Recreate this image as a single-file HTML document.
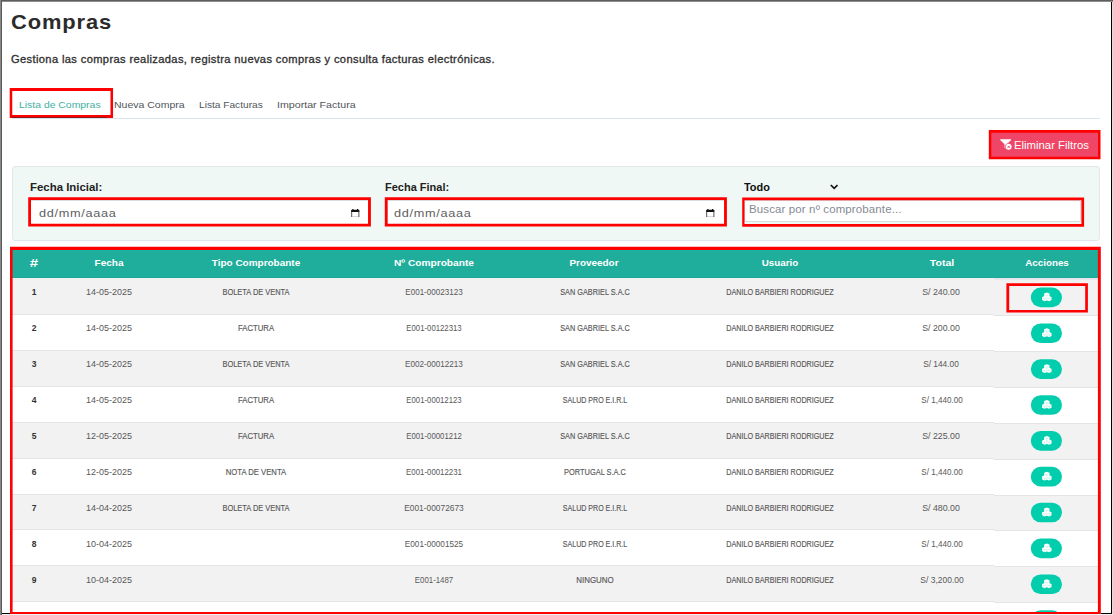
<!DOCTYPE html>
<html lang="es"><head><meta charset="utf-8"><title>Compras</title>
<style>
html,body{margin:0;padding:0;background:#fff;}
body{width:1113px;height:615px;overflow:hidden;font-family:"Liberation Sans",sans-serif;}
#page{position:relative;width:1113px;height:615px;overflow:hidden;background:#fff;}
#page>*{position:absolute;box-sizing:border-box;}
.t{white-space:nowrap;display:block;margin:0;padding:0;font-weight:normal;}
.row{left:12px;width:982px;}
.row.act{left:994px;width:106px;}
.odd{background:#f2f2f2;border-bottom:1px solid #e4e4e6;}
.even{background:#fff;border-bottom:1px solid #e4e4e6;}
.inp{background:#fff;border:1px solid #d8dde1;border-radius:2px;}
</style></head><body>
<div id="page">
<div style="left:12px;top:117.5px;width:1088px;height:1px;background:#dbe3ec"></div>
<div style="left:12px;top:117px;width:95px;height:1px;background:#444"></div>
<div style="left:990px;top:131px;width:110px;height:27.5px;background:#ef4668;border-radius:2px"></div>
<svg style="left:999.6px;top:138.5px;width:12.4px;height:11.45px" viewBox="0 0 130 120" aria-hidden="true"><path fill="#fff" d="M5 3h108c4 0 6 4 3 7L72 56v6L48 62V56L2 10C0 7 1 3 5 3z"/><path fill="#fff" d="M48 56h24v58L48 92z"/><circle cx="91" cy="82" r="38" fill="#ef4668"/><circle cx="91" cy="82" r="31" fill="#fff"/><path stroke="#ef4668" stroke-width="10" stroke-linecap="round" d="M83 74l16 16M99 74l-16 16"/></svg>
<div style="left:12px;top:166px;width:1087.6px;height:75px;background:#eff8f4;border:1px solid #e2e8ea;border-radius:3px"></div>
<div class="inp" style="left:30px;top:199.8px;width:339px;height:25px"></div>
<div class="inp" style="left:386.5px;top:199.8px;width:339px;height:25px"></div>
<div class="inp" style="left:744px;top:199.8px;width:336.5px;height:22px"></div>
<svg style="left:351.1px;top:208.5px;width:8.5px;height:8.9px" viewBox="0 0 82 87" aria-hidden="true"><path fill="#111" d="M12 0h12v8h34V0h12v8h4c5 0 8 3 8 8v14H0V16c0-5 3-8 8-8h4z"/><path fill="none" stroke="#666" stroke-width="11" d="M5.500 28v46c0 4 3 7 7 7h57c4 0 7-3 7-7V28"/></svg>
<svg style="left:706.3px;top:208.6px;width:8.5px;height:8.9px" viewBox="0 0 82 87" aria-hidden="true"><path fill="#111" d="M12 0h12v8h34V0h12v8h4c5 0 8 3 8 8v14H0V16c0-5 3-8 8-8h4z"/><path fill="none" stroke="#666" stroke-width="11" d="M5.500 28v46c0 4 3 7 7 7h57c4 0 7-3 7-7V28"/></svg>
<svg style="left:829.6px;top:184.4px;width:8.4px;height:6px" viewBox="0 0 84 60" aria-hidden="true"><path fill="none" stroke="#111" stroke-width="17" d="M8 10l34 34 34-34"/></svg>
<div style="left:12px;top:249px;width:1088px;height:29px;background:#1fae9b"></div>
<div style="left:12px;top:277px;width:1088px;height:1px;background:#1aa996"></div>
<div style="left:12px;top:250px;width:1088px;height:1px;background:#17b5a2"></div>
<div class="row odd" style="top:278px;height:37px"></div>
<div class="row odd act" style="top:279px;height:37px"></div>
<div class="row even" style="top:315px;height:36px"></div>
<div class="row even act" style="top:316px;height:36px"></div>
<div class="row odd" style="top:351px;height:36px"></div>
<div class="row odd act" style="top:352px;height:36px"></div>
<div class="row even" style="top:387px;height:36px"></div>
<div class="row even act" style="top:388px;height:36px"></div>
<div class="row odd" style="top:423px;height:36px"></div>
<div class="row odd act" style="top:424px;height:36px"></div>
<div class="row even" style="top:459px;height:36px"></div>
<div class="row even act" style="top:460px;height:36px"></div>
<div class="row odd" style="top:495px;height:35px"></div>
<div class="row odd act" style="top:496px;height:35px"></div>
<div class="row even" style="top:530px;height:36px"></div>
<div class="row even act" style="top:531px;height:36px"></div>
<div class="row odd" style="top:566px;height:36px"></div>
<div class="row odd act" style="top:567px;height:36px"></div>
<div class="row even" style="top:602px;height:36px"></div>
<div class="row even act" style="top:603px;height:36px"></div>
<svg style="left:0;top:0;width:1113px;height:615px" viewBox="0 0 1113 615" aria-hidden="true"><g transform="translate(1030.85 287.55)"><rect width="31.1" height="19.65" rx="9.82" fill="#02cdad"/><g transform="translate(10.95 4.9) scale(0.1005)"><path fill="#fff" d="M50 0l27 10v28l20 8v30L74 88 50 80 26 88 3 76V46l20-8V10z"/><path fill="none" stroke="#02cdad" stroke-opacity=".5" stroke-width="3.5" d="M30 22l20 8 20-8M50 30v18M9 57l17 7 17-7M26 64v18M57 57l17 7 17-7M74 64v18M50 54v22"/></g></g><g transform="translate(1030.85 323.41)"><rect width="31.1" height="19.65" rx="9.82" fill="#02cdad"/><g transform="translate(10.95 4.9) scale(0.1005)"><path fill="#fff" d="M50 0l27 10v28l20 8v30L74 88 50 80 26 88 3 76V46l20-8V10z"/><path fill="none" stroke="#02cdad" stroke-opacity=".5" stroke-width="3.5" d="M30 22l20 8 20-8M50 30v18M9 57l17 7 17-7M26 64v18M57 57l17 7 17-7M74 64v18M50 54v22"/></g></g><g transform="translate(1030.85 359.27)"><rect width="31.1" height="19.65" rx="9.82" fill="#02cdad"/><g transform="translate(10.95 4.9) scale(0.1005)"><path fill="#fff" d="M50 0l27 10v28l20 8v30L74 88 50 80 26 88 3 76V46l20-8V10z"/><path fill="none" stroke="#02cdad" stroke-opacity=".5" stroke-width="3.5" d="M30 22l20 8 20-8M50 30v18M9 57l17 7 17-7M26 64v18M57 57l17 7 17-7M74 64v18M50 54v22"/></g></g><g transform="translate(1030.85 395.13)"><rect width="31.1" height="19.65" rx="9.82" fill="#02cdad"/><g transform="translate(10.95 4.9) scale(0.1005)"><path fill="#fff" d="M50 0l27 10v28l20 8v30L74 88 50 80 26 88 3 76V46l20-8V10z"/><path fill="none" stroke="#02cdad" stroke-opacity=".5" stroke-width="3.5" d="M30 22l20 8 20-8M50 30v18M9 57l17 7 17-7M26 64v18M57 57l17 7 17-7M74 64v18M50 54v22"/></g></g><g transform="translate(1030.85 430.99)"><rect width="31.1" height="19.65" rx="9.82" fill="#02cdad"/><g transform="translate(10.95 4.9) scale(0.1005)"><path fill="#fff" d="M50 0l27 10v28l20 8v30L74 88 50 80 26 88 3 76V46l20-8V10z"/><path fill="none" stroke="#02cdad" stroke-opacity=".5" stroke-width="3.5" d="M30 22l20 8 20-8M50 30v18M9 57l17 7 17-7M26 64v18M57 57l17 7 17-7M74 64v18M50 54v22"/></g></g><g transform="translate(1030.85 466.85)"><rect width="31.1" height="19.65" rx="9.82" fill="#02cdad"/><g transform="translate(10.95 4.9) scale(0.1005)"><path fill="#fff" d="M50 0l27 10v28l20 8v30L74 88 50 80 26 88 3 76V46l20-8V10z"/><path fill="none" stroke="#02cdad" stroke-opacity=".5" stroke-width="3.5" d="M30 22l20 8 20-8M50 30v18M9 57l17 7 17-7M26 64v18M57 57l17 7 17-7M74 64v18M50 54v22"/></g></g><g transform="translate(1030.85 502.71)"><rect width="31.1" height="19.65" rx="9.82" fill="#02cdad"/><g transform="translate(10.95 4.9) scale(0.1005)"><path fill="#fff" d="M50 0l27 10v28l20 8v30L74 88 50 80 26 88 3 76V46l20-8V10z"/><path fill="none" stroke="#02cdad" stroke-opacity=".5" stroke-width="3.5" d="M30 22l20 8 20-8M50 30v18M9 57l17 7 17-7M26 64v18M57 57l17 7 17-7M74 64v18M50 54v22"/></g></g><g transform="translate(1030.85 538.57)"><rect width="31.1" height="19.65" rx="9.82" fill="#02cdad"/><g transform="translate(10.95 4.9) scale(0.1005)"><path fill="#fff" d="M50 0l27 10v28l20 8v30L74 88 50 80 26 88 3 76V46l20-8V10z"/><path fill="none" stroke="#02cdad" stroke-opacity=".5" stroke-width="3.5" d="M30 22l20 8 20-8M50 30v18M9 57l17 7 17-7M26 64v18M57 57l17 7 17-7M74 64v18M50 54v22"/></g></g><g transform="translate(1030.85 574.43)"><rect width="31.1" height="19.65" rx="9.82" fill="#02cdad"/><g transform="translate(10.95 4.9) scale(0.1005)"><path fill="#fff" d="M50 0l27 10v28l20 8v30L74 88 50 80 26 88 3 76V46l20-8V10z"/><path fill="none" stroke="#02cdad" stroke-opacity=".5" stroke-width="3.5" d="M30 22l20 8 20-8M50 30v18M9 57l17 7 17-7M26 64v18M57 57l17 7 17-7M74 64v18M50 54v22"/></g></g><g transform="translate(1030.85 610.29)"><rect width="31.1" height="19.65" rx="9.82" fill="#02cdad"/><g transform="translate(10.95 4.9) scale(0.1005)"><path fill="#fff" d="M50 0l27 10v28l20 8v30L74 88 50 80 26 88 3 76V46l20-8V10z"/><path fill="none" stroke="#02cdad" stroke-opacity=".5" stroke-width="3.5" d="M30 22l20 8 20-8M50 30v18M9 57l17 7 17-7M26 64v18M57 57l17 7 17-7M74 64v18M50 54v22"/></g></g></svg>
<h1 class="t" style="top:11px;font-size:20.4px;line-height:23px;color:#2b2b2b;font-weight:bold;letter-spacing:0.817px;left:11.46px;transform-origin:0 50%;transform:scaleX(1.0730);">Compras</h1>
<p class="t" style="top:53px;font-size:10.1px;line-height:13px;color:#303030;letter-spacing:0.327px;left:11.31px;transform-origin:0 50%;transform:scaleX(1.1040);-webkit-text-stroke:0.3px #303030;">Gestiona las compras realizadas, registra nuevas compras y consulta facturas electrónicas.</p>
<span class="t" style="top:99px;font-size:9.8px;line-height:12px;color:#3fb0a2;left:18.80px;transform-origin:0 50%;transform:scaleX(1.0626);">Lista de Compras</span>
<span class="t" style="top:99px;font-size:9.8px;line-height:12px;color:#50565c;left:114.15px;transform-origin:0 50%;transform:scaleX(1.0715);">Nueva Compra</span>
<span class="t" style="top:99px;font-size:9.8px;line-height:12px;color:#50565c;left:198.64px;transform-origin:0 50%;transform:scaleX(1.0363);">Lista Facturas</span>
<span class="t" style="top:99px;font-size:9.8px;line-height:12px;color:#50565c;left:277.07px;transform-origin:0 50%;transform:scaleX(1.0864);">Importar Factura</span>
<span class="t" style="top:139px;font-size:10.7px;line-height:13px;color:#fff;left:1014.05px;transform-origin:0 50%;transform:scaleX(1.0600);">Eliminar Filtros</span>
<span class="t" style="top:181px;font-size:10.3px;line-height:13px;color:#222;font-weight:bold;left:30.39px;transform-origin:0 50%;transform:scaleX(1.1081);">Fecha Inicial:</span>
<span class="t" style="top:181px;font-size:10.3px;line-height:13px;color:#222;font-weight:bold;left:384.99px;transform-origin:0 50%;transform:scaleX(1.0673);">Fecha Final:</span>
<span class="t" style="top:181px;font-size:10.3px;line-height:13px;color:#111;font-weight:bold;left:744.43px;transform-origin:0 50%;transform:scaleX(1.0591);">Todo</span>
<span class="t" style="top:206px;font-size:11.6px;line-height:14px;color:#5f5f5f;letter-spacing:0.608px;left:38.95px;transform-origin:0 50%;transform:scaleX(1.0971);">dd/mm/aaaa</span>
<span class="t" style="top:206px;font-size:11.6px;line-height:14px;color:#5f5f5f;letter-spacing:0.608px;left:394.46px;transform-origin:0 50%;transform:scaleX(1.0971);">dd/mm/aaaa</span>
<span class="t" style="top:203px;font-size:10.9px;line-height:13px;color:#858b94;letter-spacing:0.133px;left:749.30px;transform-origin:0 50%;transform:scaleX(1.0520);">Buscar por nº comprobante...</span>
<span class="t" style="top:257px;font-size:10.6px;line-height:13px;color:#fff;font-weight:bold;left:34.34px;transform:translateX(-50%) scaleX(1.4238);">#</span>
<span class="t" style="top:257px;font-size:9.3px;line-height:12px;color:#fff;font-weight:bold;left:108.96px;transform:translateX(-50%) scaleX(1.0746);">Fecha</span>
<span class="t" style="top:257px;font-size:9.3px;line-height:12px;color:#fff;font-weight:bold;left:256.34px;transform:translateX(-50%) scaleX(1.0714);">Tipo Comprobante</span>
<span class="t" style="top:257px;font-size:9.3px;line-height:12px;color:#fff;font-weight:bold;left:434.17px;transform:translateX(-50%) scaleX(1.0940);">Nº Comprobante</span>
<span class="t" style="top:257px;font-size:9.3px;line-height:12px;color:#fff;font-weight:bold;left:594.27px;transform:translateX(-50%) scaleX(1.0669);">Proveedor</span>
<span class="t" style="top:257px;font-size:9.3px;line-height:12px;color:#fff;font-weight:bold;left:779.56px;transform:translateX(-50%) scaleX(1.0547);">Usuario</span>
<span class="t" style="top:257px;font-size:9.3px;line-height:12px;color:#fff;font-weight:bold;left:942.45px;transform:translateX(-50%) scaleX(1.1304);">Total</span>
<span class="t" style="top:257px;font-size:9.3px;line-height:12px;color:#fff;font-weight:bold;left:1046.96px;transform:translateX(-50%) scaleX(1.0556);">Acciones</span>
<span class="t" style="top:287px;font-size:8.5px;line-height:11px;color:#333;font-weight:bold;left:34.20px;transform:translateX(-50%);">1</span>
<span class="t" style="top:287px;font-size:8.5px;line-height:11px;color:#585858;left:108.94px;transform:translateX(-50%) scaleX(1.0527);">14-05-2025</span>
<span class="t" style="top:287px;font-size:8.5px;line-height:11px;color:#585858;left:255.98px;transform:translateX(-50%) scaleX(0.8759);-webkit-text-stroke:0.15px #585858;">BOLETA DE VENTA</span>
<span class="t" style="top:287px;font-size:8.5px;line-height:11px;color:#585858;left:433.64px;transform:translateX(-50%) scaleX(0.9490);">E001-00023123</span>
<span class="t" style="top:287px;font-size:8.5px;line-height:11px;color:#585858;left:594.74px;transform:translateX(-50%) scaleX(0.8605);-webkit-text-stroke:0.15px #585858;">SAN GABRIEL S.A.C</span>
<span class="t" style="top:287px;font-size:8.5px;line-height:11px;color:#585858;left:779.80px;transform:translateX(-50%) scaleX(0.8464);-webkit-text-stroke:0.15px #585858;">DANILO BARBIERI RODRIGUEZ</span>
<span class="t" style="top:287px;font-size:8.5px;line-height:11px;color:#585858;left:941.32px;transform:translateX(-50%) scaleX(1.0349);">S/ 240.00</span>
<span class="t" style="top:323px;font-size:8.5px;line-height:11px;color:#333;font-weight:bold;left:34.20px;transform:translateX(-50%);">2</span>
<span class="t" style="top:323px;font-size:8.5px;line-height:11px;color:#585858;left:108.94px;transform:translateX(-50%) scaleX(1.0527);">14-05-2025</span>
<span class="t" style="top:323px;font-size:8.5px;line-height:11px;color:#585858;left:255.79px;transform:translateX(-50%) scaleX(0.9113);-webkit-text-stroke:0.15px #585858;">FACTURA</span>
<span class="t" style="top:323px;font-size:8.5px;line-height:11px;color:#585858;left:433.73px;transform:translateX(-50%) scaleX(0.9131);">E001-00122313</span>
<span class="t" style="top:323px;font-size:8.5px;line-height:11px;color:#585858;left:594.74px;transform:translateX(-50%) scaleX(0.8605);-webkit-text-stroke:0.15px #585858;">SAN GABRIEL S.A.C</span>
<span class="t" style="top:323px;font-size:8.5px;line-height:11px;color:#585858;left:779.80px;transform:translateX(-50%) scaleX(0.8464);-webkit-text-stroke:0.15px #585858;">DANILO BARBIERI RODRIGUEZ</span>
<span class="t" style="top:323px;font-size:8.5px;line-height:11px;color:#585858;left:941.32px;transform:translateX(-50%) scaleX(1.0349);">S/ 200.00</span>
<span class="t" style="top:359px;font-size:8.5px;line-height:11px;color:#333;font-weight:bold;left:34.20px;transform:translateX(-50%);">3</span>
<span class="t" style="top:359px;font-size:8.5px;line-height:11px;color:#585858;left:108.94px;transform:translateX(-50%) scaleX(1.0527);">14-05-2025</span>
<span class="t" style="top:359px;font-size:8.5px;line-height:11px;color:#585858;left:255.98px;transform:translateX(-50%) scaleX(0.8759);-webkit-text-stroke:0.15px #585858;">BOLETA DE VENTA</span>
<span class="t" style="top:359px;font-size:8.5px;line-height:11px;color:#585858;left:433.57px;transform:translateX(-50%) scaleX(0.9553);">E002-00012213</span>
<span class="t" style="top:359px;font-size:8.5px;line-height:11px;color:#585858;left:594.74px;transform:translateX(-50%) scaleX(0.8605);-webkit-text-stroke:0.15px #585858;">SAN GABRIEL S.A.C</span>
<span class="t" style="top:359px;font-size:8.5px;line-height:11px;color:#585858;left:779.80px;transform:translateX(-50%) scaleX(0.8464);-webkit-text-stroke:0.15px #585858;">DANILO BARBIERI RODRIGUEZ</span>
<span class="t" style="top:359px;font-size:8.5px;line-height:11px;color:#585858;left:941.35px;transform:translateX(-50%) scaleX(0.9806);">S/ 144.00</span>
<span class="t" style="top:395px;font-size:8.5px;line-height:11px;color:#333;font-weight:bold;left:34.20px;transform:translateX(-50%);">4</span>
<span class="t" style="top:395px;font-size:8.5px;line-height:11px;color:#585858;left:108.94px;transform:translateX(-50%) scaleX(1.0527);">14-05-2025</span>
<span class="t" style="top:395px;font-size:8.5px;line-height:11px;color:#585858;left:255.79px;transform:translateX(-50%) scaleX(0.9113);-webkit-text-stroke:0.15px #585858;">FACTURA</span>
<span class="t" style="top:395px;font-size:8.5px;line-height:11px;color:#585858;left:433.73px;transform:translateX(-50%) scaleX(0.9131);">E001-00012123</span>
<span class="t" style="top:395px;font-size:8.5px;line-height:11px;color:#585858;left:594.64px;transform:translateX(-50%) scaleX(0.8319);-webkit-text-stroke:0.15px #585858;">SALUD PRO E.I.R.L</span>
<span class="t" style="top:395px;font-size:8.5px;line-height:11px;color:#585858;left:779.80px;transform:translateX(-50%) scaleX(0.8464);-webkit-text-stroke:0.15px #585858;">DANILO BARBIERI RODRIGUEZ</span>
<span class="t" style="top:395px;font-size:8.5px;line-height:11px;color:#585858;left:941.64px;transform:translateX(-50%) scaleX(0.9541);">S/ 1,440.00</span>
<span class="t" style="top:431px;font-size:8.5px;line-height:11px;color:#333;font-weight:bold;left:34.20px;transform:translateX(-50%);">5</span>
<span class="t" style="top:431px;font-size:8.5px;line-height:11px;color:#585858;left:108.94px;transform:translateX(-50%) scaleX(1.0527);">12-05-2025</span>
<span class="t" style="top:431px;font-size:8.5px;line-height:11px;color:#585858;left:255.79px;transform:translateX(-50%) scaleX(0.9113);-webkit-text-stroke:0.15px #585858;">FACTURA</span>
<span class="t" style="top:431px;font-size:8.5px;line-height:11px;color:#585858;left:433.59px;transform:translateX(-50%) scaleX(0.9201);">E001-00001212</span>
<span class="t" style="top:431px;font-size:8.5px;line-height:11px;color:#585858;left:594.74px;transform:translateX(-50%) scaleX(0.8605);-webkit-text-stroke:0.15px #585858;">SAN GABRIEL S.A.C</span>
<span class="t" style="top:431px;font-size:8.5px;line-height:11px;color:#585858;left:779.80px;transform:translateX(-50%) scaleX(0.8464);-webkit-text-stroke:0.15px #585858;">DANILO BARBIERI RODRIGUEZ</span>
<span class="t" style="top:431px;font-size:8.5px;line-height:11px;color:#585858;left:941.32px;transform:translateX(-50%) scaleX(1.0349);">S/ 225.00</span>
<span class="t" style="top:467px;font-size:8.5px;line-height:11px;color:#333;font-weight:bold;left:34.20px;transform:translateX(-50%);">6</span>
<span class="t" style="top:467px;font-size:8.5px;line-height:11px;color:#585858;left:108.94px;transform:translateX(-50%) scaleX(1.0527);">12-05-2025</span>
<span class="t" style="top:467px;font-size:8.5px;line-height:11px;color:#585858;left:255.76px;transform:translateX(-50%) scaleX(0.9041);-webkit-text-stroke:0.15px #585858;">NOTA DE VENTA</span>
<span class="t" style="top:467px;font-size:8.5px;line-height:11px;color:#585858;left:433.58px;transform:translateX(-50%) scaleX(0.9215);">E001-00012231</span>
<span class="t" style="top:467px;font-size:8.5px;line-height:11px;color:#585858;left:594.76px;transform:translateX(-50%) scaleX(0.8748);-webkit-text-stroke:0.15px #585858;">PORTUGAL S.A.C</span>
<span class="t" style="top:467px;font-size:8.5px;line-height:11px;color:#585858;left:779.80px;transform:translateX(-50%) scaleX(0.8464);-webkit-text-stroke:0.15px #585858;">DANILO BARBIERI RODRIGUEZ</span>
<span class="t" style="top:467px;font-size:8.5px;line-height:11px;color:#585858;left:941.64px;transform:translateX(-50%) scaleX(0.9541);">S/ 1,440.00</span>
<span class="t" style="top:503px;font-size:8.5px;line-height:11px;color:#333;font-weight:bold;left:34.20px;transform:translateX(-50%);">7</span>
<span class="t" style="top:503px;font-size:8.5px;line-height:11px;color:#585858;left:108.94px;transform:translateX(-50%) scaleX(1.0527);">14-04-2025</span>
<span class="t" style="top:503px;font-size:8.5px;line-height:11px;color:#585858;left:255.98px;transform:translateX(-50%) scaleX(0.8759);-webkit-text-stroke:0.15px #585858;">BOLETA DE VENTA</span>
<span class="t" style="top:503px;font-size:8.5px;line-height:11px;color:#585858;left:433.99px;transform:translateX(-50%) scaleX(0.9835);">E001-00072673</span>
<span class="t" style="top:503px;font-size:8.5px;line-height:11px;color:#585858;left:594.64px;transform:translateX(-50%) scaleX(0.8319);-webkit-text-stroke:0.15px #585858;">SALUD PRO E.I.R.L</span>
<span class="t" style="top:503px;font-size:8.5px;line-height:11px;color:#585858;left:779.80px;transform:translateX(-50%) scaleX(0.8464);-webkit-text-stroke:0.15px #585858;">DANILO BARBIERI RODRIGUEZ</span>
<span class="t" style="top:503px;font-size:8.5px;line-height:11px;color:#585858;left:941.32px;transform:translateX(-50%) scaleX(1.0349);">S/ 480.00</span>
<span class="t" style="top:539px;font-size:8.5px;line-height:11px;color:#333;font-weight:bold;left:34.20px;transform:translateX(-50%);">8</span>
<span class="t" style="top:539px;font-size:8.5px;line-height:11px;color:#585858;left:108.94px;transform:translateX(-50%) scaleX(1.0527);">10-04-2025</span>
<span class="t" style="top:539px;font-size:8.5px;line-height:11px;color:#585858;left:434.02px;transform:translateX(-50%) scaleX(0.9643);">E001-00001525</span>
<span class="t" style="top:539px;font-size:8.5px;line-height:11px;color:#585858;left:594.64px;transform:translateX(-50%) scaleX(0.8319);-webkit-text-stroke:0.15px #585858;">SALUD PRO E.I.R.L</span>
<span class="t" style="top:539px;font-size:8.5px;line-height:11px;color:#585858;left:779.80px;transform:translateX(-50%) scaleX(0.8464);-webkit-text-stroke:0.15px #585858;">DANILO BARBIERI RODRIGUEZ</span>
<span class="t" style="top:539px;font-size:8.5px;line-height:11px;color:#585858;left:941.64px;transform:translateX(-50%) scaleX(0.9541);">S/ 1,440.00</span>
<span class="t" style="top:575px;font-size:8.5px;line-height:11px;color:#333;font-weight:bold;left:34.20px;transform:translateX(-50%);">9</span>
<span class="t" style="top:575px;font-size:8.5px;line-height:11px;color:#585858;left:108.94px;transform:translateX(-50%) scaleX(1.0527);">10-04-2025</span>
<span class="t" style="top:575px;font-size:8.5px;line-height:11px;color:#585858;left:433.94px;transform:translateX(-50%) scaleX(0.9197);">E001-1487</span>
<span class="t" style="top:575px;font-size:8.5px;line-height:11px;color:#585858;left:594.97px;transform:translateX(-50%) scaleX(0.9355);-webkit-text-stroke:0.15px #585858;">NINGUNO</span>
<span class="t" style="top:575px;font-size:8.5px;line-height:11px;color:#585858;left:779.80px;transform:translateX(-50%) scaleX(0.8464);-webkit-text-stroke:0.15px #585858;">DANILO BARBIERI RODRIGUEZ</span>
<span class="t" style="top:575px;font-size:8.5px;line-height:11px;color:#585858;left:941.89px;transform:translateX(-50%) scaleX(0.9966);">S/ 3,200.00</span>
<span class="t" style="top:611px;font-size:8.5px;line-height:11px;color:#333;font-weight:bold;left:34.20px;transform:translateX(-50%);">10</span>
<span class="t" style="top:611px;font-size:8.5px;line-height:11px;color:#585858;left:108.94px;transform:translateX(-50%) scaleX(1.0527);">10-04-2025</span>
<span class="t" style="top:611px;font-size:8.5px;line-height:11px;color:#585858;left:434.09px;transform:translateX(-50%) scaleX(0.9434);">E001-1486</span>
<span class="t" style="top:611px;font-size:8.5px;line-height:11px;color:#585858;left:594.97px;transform:translateX(-50%) scaleX(0.9355);-webkit-text-stroke:0.15px #585858;">NINGUNO</span>
<span class="t" style="top:611px;font-size:8.5px;line-height:11px;color:#585858;left:779.80px;transform:translateX(-50%) scaleX(0.8464);-webkit-text-stroke:0.15px #585858;">DANILO BARBIERI RODRIGUEZ</span>
<span class="t" style="top:611px;font-size:8.5px;line-height:11px;color:#585858;left:941.64px;transform:translateX(-50%) scaleX(0.9541);">S/ 1,200.00</span>
<svg style="left:0;top:0;width:1113px;height:615px" viewBox="0 0 1113 615" aria-hidden="true">
<rect x="994" y="278" width="106" height="2.1" fill="#e9e7ed"/>
<path fill="#f00" fill-rule="evenodd" d="M9.7 88.05H113.05V117.9H9.7Z M12.25 91.00V114.90H110.50V91.00Z"/>
<path fill="#f00" fill-rule="evenodd" d="M988.8 129.9H1100.5V159.2H988.8Z M991.30 132.80V156.70H1098.00V132.80Z"/>
<path fill="#f00" fill-rule="evenodd" d="M28.2 197.3H370.9V226.6H28.2Z M31.00 199.90V223.80H368.05V199.90Z"/>
<path fill="#f00" fill-rule="evenodd" d="M384.8 197.3H726.9V226.6H384.8Z M387.60 199.90V223.80H724.05V199.90Z"/>
<path fill="#f00" fill-rule="evenodd" d="M742.2 197.6H1084.1V226.8H742.2Z M744.50 200.20V224.00H1081.40V200.20Z"/>
<path fill="#f00" fill-rule="evenodd" d="M1006.4 283.2H1087.9V312.6H1006.4Z M1009.20 286.00V309.90H1085.20V286.00Z"/>
<path fill="#f00" fill-rule="evenodd" d="M10.0 246.8H1100.8V614.0H10.0Z M12.60 250.05V611.90H1097.90V250.05Z"/>
<rect x="12.2" y="117.1" width="94.6" height="0.8" fill="#3a2a2a" fill-opacity=".75"/>
</svg>
<div style="left:0;top:0;width:1113px;height:1px;background:#5e5e5e"></div>
<div style="left:2px;top:1px;width:1111px;height:1px;background:#8c8c8c"></div>
<div style="left:0;top:0;width:1px;height:615px;background:#888"></div>
<div style="left:1px;top:1px;width:1px;height:614px;background:#5a5a5a"></div>
<div style="left:1111px;top:2px;width:1px;height:612px;background:#000"></div>
<div style="left:1112px;top:2px;width:1px;height:612px;background:#dedede"></div>
<div style="left:1100.8px;top:613px;width:11.2px;height:1px;background:#000"></div>
<div style="left:2px;top:613px;width:8px;height:1px;background:#000"></div>
<div style="left:2px;top:614px;width:1111px;height:1px;background:#f0f0f0"></div>
</div>
</body></html>
